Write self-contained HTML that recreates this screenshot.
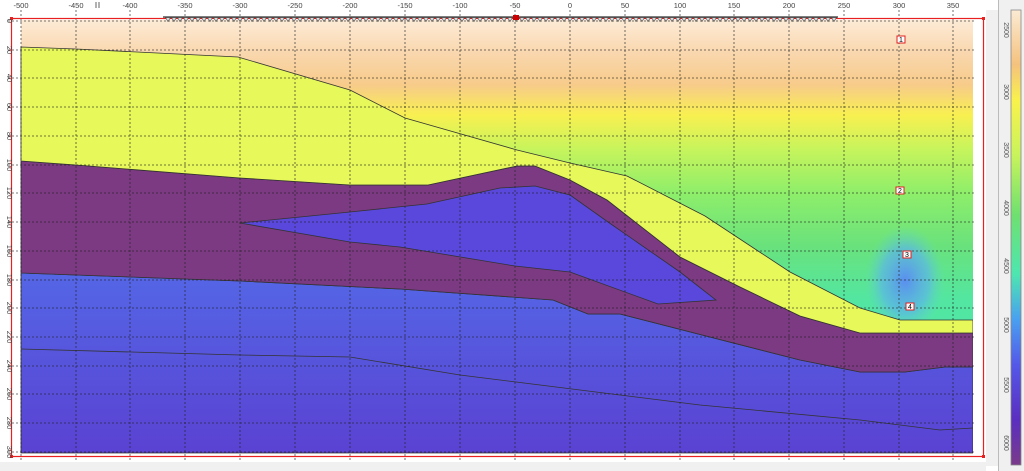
<!DOCTYPE html>
<html><head><style>
html,body{margin:0;padding:0;background:#fff;width:1024px;height:471px;overflow:hidden;font-family:"Liberation Sans",sans-serif}
</style></head><body>
<svg width="1024" height="471" xmlns="http://www.w3.org/2000/svg" font-family="Liberation Sans" font-size="8" fill="#444">
<defs>
<linearGradient id="bg" x1="0" y1="0" x2="0" y2="1">
<stop offset="0" stop-color="#fdebd6"/>
<stop offset="0.08" stop-color="#f9d6ac"/>
<stop offset="0.15" stop-color="#f7cb8a"/>
<stop offset="0.22" stop-color="#f8f050"/>
<stop offset="0.30" stop-color="#c6f45c"/>
<stop offset="0.40" stop-color="#8eee6a"/>
<stop offset="0.52" stop-color="#6ae27c"/>
<stop offset="0.65" stop-color="#52e6a2"/>
<stop offset="1" stop-color="#50e0b0"/>
</linearGradient>
<linearGradient id="blue" x1="0" y1="0" x2="0" y2="1">
<stop offset="0" stop-color="#5466e6"/>
<stop offset="1" stop-color="#5a42d2"/>
</linearGradient>
<linearGradient id="cb" x1="0" y1="0" x2="0" y2="1">
<stop offset="0" stop-color="#fbead4"/>
<stop offset="0.12" stop-color="#f5c27e"/>
<stop offset="0.2" stop-color="#f9f24c"/>
<stop offset="0.32" stop-color="#c8f35c"/>
<stop offset="0.45" stop-color="#6fe070"/>
<stop offset="0.58" stop-color="#4ee6b0"/>
<stop offset="0.68" stop-color="#4aa0f0"/>
<stop offset="0.78" stop-color="#5458e8"/>
<stop offset="0.9" stop-color="#5a2ec0"/>
<stop offset="1" stop-color="#7a3a8a"/>
</linearGradient>
<radialGradient id="anom" cx="0.5" cy="0.55" r="0.5">
<stop offset="0" stop-color="#5a8ef0"/>
<stop offset="0.6" stop-color="#5cb6e8" stop-opacity="0.7"/>
<stop offset="1" stop-color="#60d8c0" stop-opacity="0"/>
</radialGradient>
<pattern id="tri" x="165" y="17" width="6" height="7" patternUnits="userSpaceOnUse">
<path d="M0.5,0.5 L5.5,0.5 L3,4.5 Z" fill="#ddd" stroke="#444" stroke-width="0.6"/>
</pattern>
</defs>
<rect x="21" y="20" width="952" height="433" fill="url(#bg)"/>
<ellipse cx="905" cy="275" rx="40" ry="55" fill="url(#anom)"/>
<polygon points="21,273 240,281 400,289 553,300 588,314 620,314 800,360 860,372 905,372 945,367 973,367 973,453 21,453" fill="url(#blue)" stroke="#333" stroke-width="0.8"/>
<polygon points="21,161 76,165 240,178 350,185 428,185 517,166 535,166 570,180 607,200 680,257 740,287 800,316 860,333 973,333 973,367 945,367 905,372 860,372 800,360 620,314 588,314 553,300 400,289 240,281 21,273" fill="#7b3a82" stroke="#333" stroke-width="0.8"/>
<polygon points="240,223 350,212 427,204 500,188 535,186 570,195 608,222 680,272 716,300 658,304 570,272 515,266 400,247 350,242" fill="#5a48dc" stroke="#333" stroke-width="0.8"/>
<polygon points="21,47 76,49 238,57 350,90 405,118 517,150 570,163 627,176 705,216 790,272 860,308 900,320 973,320 973,333 860,333 800,316 740,287 680,257 607,200 570,180 535,166 517,166 428,185 350,185 240,178 76,165 21,161" fill="#e6f85a" stroke="#333" stroke-width="0.8"/>
<polyline points="21,349 240,355 350,357 460,375 580,390 700,405 860,420 940,430 973,428" fill="none" stroke="#333" stroke-width="0.8"/>
<rect x="973" y="20" width="11" height="436" fill="#fff"/>
<g stroke="#222" stroke-width="0.8" stroke-dasharray="2,2" opacity="0.8">
<path d="M21,10V462M76,10V462M130,10V462M185,10V462M240,10V462M295,10V462M350,10V462M405,10V462M460,10V462M515,10V462M570,10V462M625,10V462M680,10V462M734,10V462M789,10V462M844,10V462M899,10V462M953,10V462"/>
<path d="M8,21H975M8,50H975M8,78H975M8,107H975M8,136H975M8,165H975M8,193H975M8,222H975M8,251H975M8,280H975M8,308H975M8,337H975M8,366H975M8,394H975M8,423H975M8,452H975"/>
</g>
<rect x="11.5" y="18.5" width="972" height="438" fill="none" stroke="#e82020" stroke-width="1.2"/>
<g fill="#e82020"><rect x="10" y="17" width="3" height="3"/><rect x="982" y="17" width="3" height="3"/><rect x="10" y="455" width="3" height="3"/><rect x="982" y="455" width="3" height="3"/></g>
<rect x="165" y="17" width="672" height="6" fill="url(#tri)"/>
<line x1="163" y1="17" x2="838" y2="17" stroke="#333" stroke-width="1.2"/>
<rect x="513" y="15" width="6" height="5" fill="#c00"/>
<rect x="0" y="0" width="1000" height="9" fill="#fff"/>
<g text-anchor="middle" font-size="7.5">
<text x="21" y="8">-500</text><text x="76" y="8">-450</text><text x="130" y="8">-400</text><text x="185" y="8">-350</text><text x="240" y="8">-300</text><text x="295" y="8">-250</text><text x="350" y="8">-200</text><text x="405" y="8">-150</text><text x="460" y="8">-100</text><text x="515" y="8">-50</text><text x="570" y="8">0</text><text x="625" y="8">50</text><text x="680" y="8">100</text><text x="734" y="8">150</text><text x="789" y="8">200</text><text x="844" y="8">250</text><text x="899" y="8">300</text><text x="953" y="8">350</text>
</g>
<path d="M96,2V8M99,2V8" stroke="#666"/>
<g font-size="7.5" text-anchor="middle">
<text transform="translate(7,21) rotate(90)">0</text><text transform="translate(7,50) rotate(90)">20</text><text transform="translate(7,107) rotate(90)">60</text><text transform="translate(7,78) rotate(90)">40</text><text transform="translate(7,136) rotate(90)">80</text><text transform="translate(7,165) rotate(90)">100</text><text transform="translate(7,193) rotate(90)">120</text><text transform="translate(7,222) rotate(90)">140</text><text transform="translate(7,251) rotate(90)">160</text><text transform="translate(7,280) rotate(90)">180</text><text transform="translate(7,308) rotate(90)">200</text><text transform="translate(7,337) rotate(90)">220</text><text transform="translate(7,366) rotate(90)">240</text><text transform="translate(7,394) rotate(90)">260</text><text transform="translate(7,423) rotate(90)">280</text><text transform="translate(7,452) rotate(90)">300</text>
</g>
<g font-size="7" text-anchor="middle" fill="#000">
<rect x="897" y="36" width="8" height="7" fill="#fff" stroke="#e02020"/><text x="901" y="42">1</text>
<rect x="896" y="187" width="8" height="7" fill="#fff" stroke="#e02020"/><text x="900" y="193">2</text>
<rect x="903" y="251" width="8" height="7" fill="#fff" stroke="#e02020"/><text x="907" y="257">3</text>
<rect x="906" y="303" width="8" height="7" fill="#fff" stroke="#e02020"/><text x="910" y="309">4</text>
</g>
<rect x="986" y="10" width="12" height="456" fill="#f0f0f0"/>
<line x1="998.5" y1="0" x2="998.5" y2="471" stroke="#bbb"/>
<rect x="999" y="0" width="25" height="471" fill="#f0f0f0"/>
<rect x="1011" y="10" width="10" height="455" fill="url(#cb)" stroke="#888" stroke-width="0.8"/>
<g font-size="7" text-anchor="middle" fill="#555">
<text transform="translate(1004,30) rotate(90)">2500</text><text transform="translate(1004,92) rotate(90)">3000</text><text transform="translate(1004,150) rotate(90)">3500</text><text transform="translate(1004,208) rotate(90)">4000</text><text transform="translate(1004,266) rotate(90)">4500</text><text transform="translate(1004,325) rotate(90)">5000</text><text transform="translate(1004,385) rotate(90)">5500</text><text transform="translate(1004,443) rotate(90)">6000</text>
</g>
<rect x="0" y="462" width="986" height="9" fill="#f0f0f0"/>
</svg>
</body></html>
